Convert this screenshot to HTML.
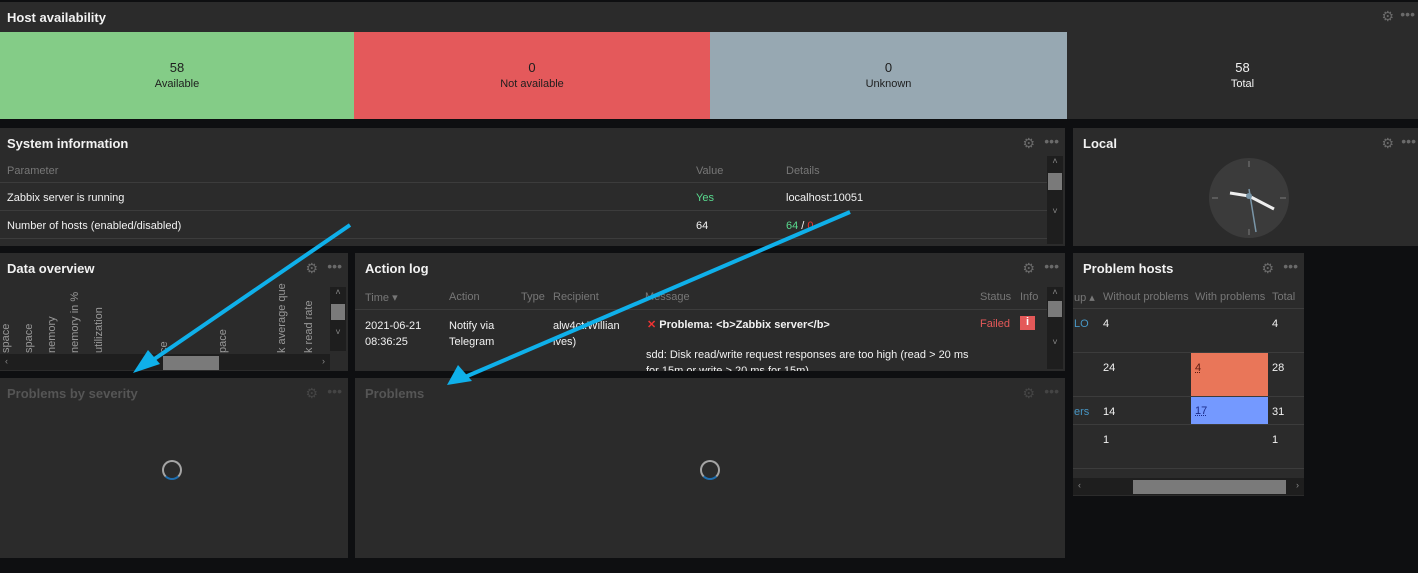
<!DOCTYPE html>
<html><head><style>
*{box-sizing:border-box;margin:0;padding:0}
body{width:1418px;height:573px;background:#0e0f11;font-family:"Liberation Sans",sans-serif;font-size:11px;color:#f2f2f2;position:relative;overflow:hidden}
.w{position:absolute;background:#2b2b2b;overflow:hidden}
.t{position:absolute;left:7px;top:8px;font-size:13px;font-weight:bold;color:#f2f2f2}
.t2{left:10px}
.dim .t{color:#555}
.ic{position:absolute;top:7px;color:#6a6a6a;font-size:14px}
.a{position:absolute;white-space:nowrap}
.h{color:#777}
.ln{position:absolute;height:1px;background:#3c3c3c}
.sb{position:absolute;background:#1e1e1e;color:#888;font-size:9px;text-align:center}
.th{position:absolute;background:#7a7a7a}
.spin{position:absolute;width:20px;height:20px;border-radius:50%;border:2px solid #a5a5a5;border-bottom-color:#1f6fb0}
.tile{position:absolute;top:30px;height:87px;text-align:center;padding-top:28px;line-height:16px}
</style></head><body>

<div class="w" style="left:0;top:2px;width:1418px;height:117px">
<div class="t" style="top:8px">Host availability</div>
<div class="ic" style="right:24px;top:6px">⚙</div><div class="ic" style="right:3px;top:4px">•••</div>
<div class="tile" style="left:0;width:354px;background:#84cc87;color:#1e1e1e"><div style="font-size:13px">58</div><div>Available</div></div>
<div class="tile" style="left:354px;width:356px;background:#e4595b;color:#1e1e1e"><div style="font-size:13px">0</div><div>Not available</div></div>
<div class="tile" style="left:710px;width:357px;background:#97a8b2;color:#1e1e1e"><div style="font-size:13px">0</div><div>Unknown</div></div>
<div class="tile" style="left:1067px;width:351px;color:#f2f2f2"><div style="font-size:13px">58</div><div>Total</div></div>
</div>

<div class="w" style="left:0;top:128px;width:1065px;height:118px">
<div class="t">System information</div>
<div class="ic" style="right:30px">⚙</div><div class="ic" style="right:6px;top:5px">•••</div>
<div class="a h" style="left:7px;top:37px">Parameter</div><div class="a h" style="left:696px;top:37px">Value</div><div class="a h" style="left:786px;top:37px">Details</div>
<div class="ln" style="left:0;top:54px;width:1047px"></div>
<div class="a" style="left:7px;top:64px">Zabbix server is running</div><div class="a" style="left:696px;top:64px;color:#59db8f">Yes</div><div class="a" style="left:786px;top:64px">localhost:10051</div>
<div class="ln" style="left:0;top:82px;width:1047px"></div>
<div class="a" style="left:7px;top:92px">Number of hosts (enabled/disabled)</div><div class="a" style="left:696px;top:92px">64</div><div class="a" style="left:786px;top:92px"><span style="color:#59db8f">64</span> / <span style="color:#e33">0</span></div>
<div class="ln" style="left:0;top:110px;width:1047px"></div>
<div class="sb" style="left:1047px;top:28px;width:16px;height:88px">˄<br><br><br><br><br>˅</div>
<div class="th" style="left:1048px;top:45px;width:14px;height:17px"></div>
</div>

<div class="w" style="left:1073px;top:128px;width:345px;height:118px">
<div class="t t2">Local</div>
<div class="ic" style="right:24px">⚙</div><div class="ic" style="right:2px;top:5px">•••</div>
<svg style="position:absolute;left:135px;top:29px" width="82" height="82" viewBox="0 0 82 82">
<circle cx="41" cy="41" r="40" fill="#3b3b3b"/>
<g stroke="#666" stroke-width="1.5">
<line x1="41" y1="4" x2="41" y2="10"/><line x1="41" y1="72" x2="41" y2="78"/><line x1="4" y1="41" x2="10" y2="41"/><line x1="72" y1="41" x2="78" y2="41"/>
</g>
<line x1="22" y1="36" x2="41" y2="39" stroke="#eee" stroke-width="3"/>
<line x1="41" y1="39" x2="66" y2="52" stroke="#eee" stroke-width="3"/>
<line x1="41" y1="32" x2="48" y2="75" stroke="#7a96a8" stroke-width="1.5"/>
<circle cx="41" cy="39" r="3" fill="#7a96a8"/>
</svg>
</div>

<div class="w" style="left:0;top:253px;width:348px;height:118px">
<div class="t">Data overview</div>
<div class="ic" style="right:30px">⚙</div><div class="ic" style="right:6px;top:5px">•••</div>
<div class="a h" style="left:-2px;top:34px;height:66px;width:340px;color:#999">
<span class="a" style="left:14px;bottom:0;transform:rotate(-90deg);transform-origin:left bottom">space</span>
<span class="a" style="left:37px;bottom:0;transform:rotate(-90deg);transform-origin:left bottom">space</span>
<span class="a" style="left:60px;bottom:0;transform:rotate(-90deg);transform-origin:left bottom">nemory</span>
<span class="a" style="left:83px;bottom:0;transform:rotate(-90deg);transform-origin:left bottom">nemory in %</span>
<span class="a" style="left:107px;bottom:0;transform:rotate(-90deg);transform-origin:left bottom">utilization</span>
<span class="a" style="left:172px;bottom:0;transform:rotate(-90deg);transform-origin:left bottom">ce</span>
<span class="a" style="left:231px;bottom:0;transform:rotate(-90deg);transform-origin:left bottom">pace</span>
<span class="a" style="left:290px;bottom:0;transform:rotate(-90deg);transform-origin:left bottom">k average que</span>
<span class="a" style="left:317px;bottom:0;transform:rotate(-90deg);transform-origin:left bottom">k read rate</span>
</div>
<div class="sb" style="left:0;top:101px;width:330px;height:16px;text-align:left;padding:2px 5px">‹<span style="float:right">›</span></div>
<div class="th" style="left:163px;top:103px;width:56px;height:14px"></div>
<div class="sb" style="left:330px;top:34px;width:16px;height:64px">˄<br><br><br><br>˅</div>
<div class="th" style="left:331px;top:51px;width:14px;height:16px"></div>
</div>

<div class="w" style="left:355px;top:253px;width:710px;height:118px">
<div class="t t2">Action log</div>
<div class="ic" style="right:30px">⚙</div><div class="ic" style="right:6px;top:5px">•••</div>
<div class="a h" style="left:10px;top:38px">Time ▾</div><div class="a h" style="left:94px;top:38px">Action</div><div class="a h" style="left:166px;top:38px">Type</div><div class="a h" style="left:198px;top:38px">Recipient</div><div class="a h" style="left:290px;top:38px">Message</div><div class="a h" style="left:625px;top:38px">Status</div><div class="a h" style="left:665px;top:38px">Info</div>
<div class="ln" style="left:0;top:56px;width:692px"></div>
<div class="a" style="left:10px;top:65px;line-height:16px">2021-06-21<br>08:36:25</div>
<div class="a" style="left:94px;top:65px;line-height:16px">Notify via<br>Telegram</div>
<div class="a" style="left:198px;top:65px;line-height:16px">alw4ct.Willian<br>lves)</div>
<div class="a" style="left:292px;top:65px;font-weight:bold"><span style="color:#e33">✕</span> Problema: &lt;b&gt;Zabbix server&lt;/b&gt;</div>
<div class="a" style="left:291px;top:96px">sdd: Disk read/write request responses are too high (read &gt; 20 ms</div>
<div class="a" style="left:291px;top:112px">for 15m or write &gt; 20 ms for 15m)</div>
<div class="a" style="left:625px;top:65px;color:#e45959">Failed</div>
<div class="a" style="left:665px;top:63px;width:15px;height:14px;background:#e45959;color:#fff;text-align:center;font-weight:bold">i</div>
<div class="sb" style="left:692px;top:34px;width:16px;height:82px">˄<br><br><br><br><br>˅</div>
<div class="th" style="left:693px;top:48px;width:14px;height:16px"></div>
</div>

<div class="w" style="left:1073px;top:253px;width:231px;height:243px">
<div class="t t2">Problem hosts</div>
<div class="ic" style="right:30px">⚙</div><div class="ic" style="right:6px;top:5px">•••</div>
<div class="a h" style="left:1px;top:38px">up ▴</div><div class="a h" style="left:30px;top:38px">Without problems</div><div class="a h" style="left:122px;top:38px">With problems</div><div class="a h" style="left:199px;top:38px">Total</div>
<div class="ln" style="left:0;top:55px;width:231px"></div>
<div class="a" style="left:1px;top:65px;color:#4796c4">LO</div><div class="a" style="left:30px;top:65px">4</div><div class="a" style="left:199px;top:65px">4</div>
<div class="ln" style="left:0;top:99px;width:231px"></div>
<div class="a" style="left:118px;top:100px;width:77px;height:43px;background:#e97659;color:#5a1a10;padding:9px 4px"><u style="text-decoration-style:dotted">4</u></div>
<div class="a" style="left:30px;top:109px">24</div><div class="a" style="left:199px;top:109px">28</div>
<div class="ln" style="left:0;top:143px;width:231px"></div>
<div class="a" style="left:118px;top:144px;width:77px;height:27px;background:#7499ff;color:#1a2a8a;padding:8px 4px"><u style="text-decoration-style:dotted">17</u></div>
<div class="a" style="left:1px;top:153px;color:#4796c4">ers</div><div class="a" style="left:30px;top:153px">14</div><div class="a" style="left:199px;top:153px">31</div>
<div class="ln" style="left:0;top:171px;width:231px"></div>
<div class="a" style="left:30px;top:181px">1</div><div class="a" style="left:199px;top:181px">1</div>
<div class="ln" style="left:0;top:215px;width:231px"></div>
<div class="sb" style="left:0;top:225px;width:231px;height:17px;text-align:left;padding:2px 5px">‹<span style="float:right">›</span></div>
<div class="th" style="left:60px;top:227px;width:153px;height:14px"></div>
</div>

<div class="w dim" style="left:0;top:378px;width:348px;height:180px">
<div class="t">Problems by severity</div>
<div class="ic" style="right:30px;color:#444">⚙</div><div class="ic" style="right:6px;top:5px;color:#444">•••</div>
<div class="spin" style="left:162px;top:82px"></div>
</div>

<div class="w dim" style="left:355px;top:378px;width:710px;height:180px">
<div class="t t2">Problems</div>
<div class="ic" style="right:30px;color:#444">⚙</div><div class="ic" style="right:6px;top:5px;color:#444">•••</div>
<div class="spin" style="left:345px;top:82px"></div>
</div>

<svg style="position:absolute;left:0;top:0" width="1418" height="573">
<g stroke="#0fb0ea" stroke-width="4" fill="#0fb0ea">
<line x1="350" y1="225" x2="150" y2="362"/>
<line x1="850" y1="212" x2="465" y2="377"/>
</g>
<polygon points="133,373 148,350 160,364" fill="#0fb0ea"/>
<polygon points="447,385 458,365 472,381" fill="#0fb0ea"/>
</svg>
</body></html>
